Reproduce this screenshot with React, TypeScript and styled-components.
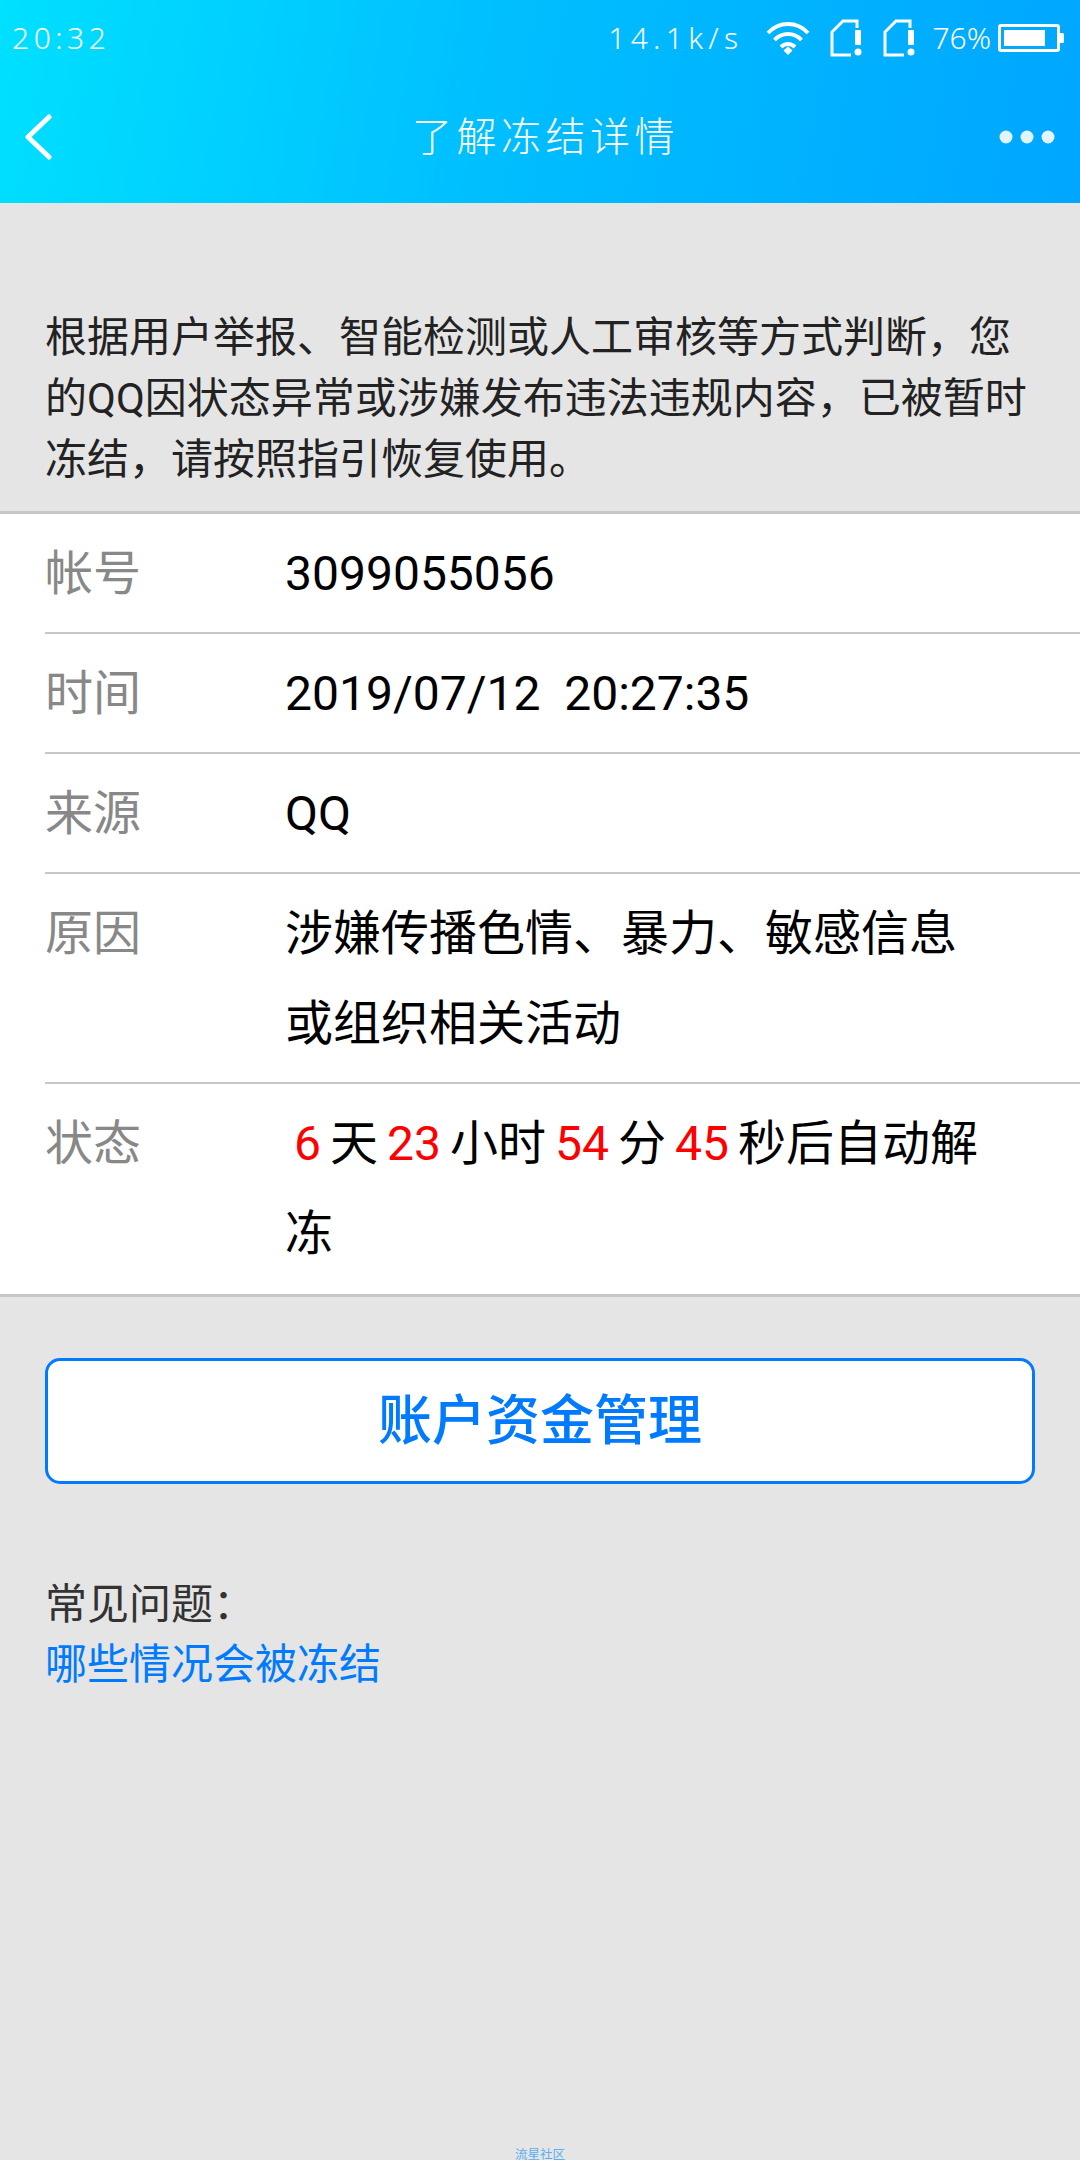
import React from 'react'
import styled, { createGlobalStyle } from 'styled-components'

const GlobalStyle = createGlobalStyle`
  html, body {
    margin: 0;
    padding: 0;
    background: #e5e5e5;
  }
  * {
    box-sizing: border-box;
  }
`

const Page = styled.div`
  width: 1080px;
  height: 2160px;
  overflow: hidden;
  display: flex;
  flex-direction: column;
  background: #e5e5e5;
  font-family: Roboto, 'Noto Sans CJK SC', sans-serif;
`

const Header = styled.header`
  height: 203px;
  display: flex;
  flex-direction: column;
  background: linear-gradient(100deg, #00e0ff 0%, #00bfff 45%, #00a6ff 100%);
  color: #fff;
`

const StatusBar = styled.div`
  height: 76px;
  display: flex;
  align-items: center;
  justify-content: space-between;
  padding: 0 16px 0 12px;
`

const StatusText = styled.span`
  font-family: 'Noto Sans', 'Noto Sans CJK SC', sans-serif;
  font-weight: 300;
  font-size: 30px;
  letter-spacing: ${({ $spacing }: { $spacing: number }) => $spacing}px;
  line-height: 40px;
`

const StatusIcons = styled.div`
  display: flex;
  align-items: center;
  gap: 20px;
`

const Speed = styled(StatusText)`
  margin-right: 3px;
`

const Percent = styled(StatusText)`
  margin-left: -4px;
`

const Battery = styled.svg`
  margin-left: -13px;
`

const NavBar = styled.nav`
  height: 127px;
  display: flex;
  align-items: center;
  justify-content: space-between;
  padding: 0 25px 6px 24px;
`

const Title = styled.h1`
  margin: 0 0 6px 40px;
  font-family: 'Noto Sans CJK SC', sans-serif;
  font-size: 40px;
  font-weight: 300;
  letter-spacing: 4.5px;
`

const Intro = styled.p`
  margin: 0;
  padding: 104px 45px 21px;
  font-size: 42px;
  line-height: 61px;
  color: #222;
`

const Table = styled.section`
  background: #fff;
  border-top: 3px solid #c8c8cc;
  border-bottom: 3px solid #c8c8cc;
  padding-left: 45px;
`

const Row = styled.div`
  display: flex;
  padding: 15px 0 13px;
  border-bottom: 2px solid #c8c8cc;

  &:last-child {
    border-bottom: none;
    padding-top: 15px;
    padding-bottom: 15px;
  }
`

const Label = styled.div`
  width: 240px;
  flex-shrink: 0;
  font-size: 48px;
  line-height: 90px;
  color: #888;
`

const Value = styled.div`
  width: 700px;
  font-size: 48px;
  line-height: 90px;
  color: #000;
`

const Red = styled.span`
  padding: 0 9px;
  color: #f00;
`

const ActionButton = styled.button`
  display: block;
  margin: 61px 45px 0;
  width: 990px;
  height: 126px;
  padding: 0 0 10px;
  background: #fff;
  border: 3px solid #007aff;
  border-radius: 15px;
  font-family: Roboto, 'Noto Sans CJK SC', sans-serif;
  font-size: 54px;
  font-weight: 500;
  color: #007aff;
`

const Faq = styled.section`
  margin-top: 91px;
  padding: 0 45px;
  font-size: 42px;
  line-height: 60px;
  color: #333;
`

const FaqLink = styled.a`
  display: block;
  color: #007aff;
`

const Watermark = styled.div`
  margin-top: auto;
  margin-bottom: -2px;
  text-align: center;
  font-size: 12.5px;
  line-height: 14px;
  color: #5ab0f0;
`

const WifiIcon = () => (
  <svg width="44" height="36" viewBox="0 0 44 36" fill="none" stroke="#fff" strokeWidth="4">
    <path d="M2 13C13 1 31 1 42 13" />
    <path d="M8.5 20C16 12 28 12 35.500 20" />
    <path d="M15 27C19 23 25 23 29 27" />
    <path d="M17.500 30.500L22 26.500L26.500 30.500L22 35Z" fill="#fff" stroke="none" />
  </svg>
)

const SimIcon = () => (
  <svg width="33" height="38" viewBox="0 0 33 38" fill="none">
    <path d="M21 36H2V13L13 2H27V9" stroke="#fff" strokeWidth="3" />
    <rect x="25" y="11" width="6" height="15" rx="1" fill="#fff" />
    <circle cx="28" cy="33" r="3.500" fill="#fff" />
  </svg>
)

const BatteryIcon = () => (
  <Battery width="66" height="28" viewBox="0 0 66 28" fill="none">
    <rect x="1.500" y="1.500" width="59" height="25" rx="1.500" stroke="#fff" strokeWidth="3" />
    <rect x="6" y="6" width="41" height="16" fill="#fff" />
    <rect x="61" y="9" width="5" height="10" rx="1.500" fill="#fff" />
  </Battery>
)

const BackIcon = () => (
  <svg width="28" height="46" viewBox="0 0 28 46" fill="none" stroke="#fff" strokeWidth="5" strokeLinecap="round" strokeLinejoin="round">
    <path d="M25 3L4 23L25 43" />
  </svg>
)

const MoreIcon = () => (
  <svg width="56" height="14" viewBox="0 0 56 14" fill="#fff" fillOpacity="0.88">
    <circle cx="7" cy="7" r="6.500" />
    <circle cx="28" cy="7" r="6.500" />
    <circle cx="49" cy="7" r="6.500" />
  </svg>
)

const App = () => (
  <Page>
    <GlobalStyle />
    <Header>
      <StatusBar>
        <StatusText $spacing={4.5}>20:32</StatusText>
        <StatusIcons>
          <Speed $spacing={5.3}>14.1k/s</Speed>
          <WifiIcon />
          <SimIcon />
          <SimIcon />
          <Percent $spacing={0}>76%</Percent>
          <BatteryIcon />
        </StatusIcons>
      </StatusBar>
      <NavBar>
        <BackIcon />
        <Title>了解冻结详情</Title>
        <MoreIcon />
      </NavBar>
    </Header>

    <Intro>根据用户举报、智能检测或人工审核等方式判断，您的QQ因状态异常或涉嫌发布违法违规内容，已被暂时冻结，请按照指引恢复使用。</Intro>

    <Table>
      <Row>
        <Label>帐号</Label>
        <Value>3099055056</Value>
      </Row>
      <Row>
        <Label>时间</Label>
        <Value>2019/07/12&nbsp; 20:27:35</Value>
      </Row>
      <Row>
        <Label>来源</Label>
        <Value>QQ</Value>
      </Row>
      <Row>
        <Label>原因</Label>
        <Value>涉嫌传播色情、暴力、敏感信息或组织相关活动</Value>
      </Row>
      <Row>
        <Label>状态</Label>
        <Value>
          <Red>6</Red>天<Red>23</Red>小时<Red>54</Red>分<Red>45</Red>秒后自动解冻
        </Value>
      </Row>
    </Table>

    <ActionButton>账户资金管理</ActionButton>

    <Faq>
      常见问题：
      <FaqLink>哪些情况会被冻结</FaqLink>
    </Faq>

    <Watermark>流星社区</Watermark>
  </Page>
)

export default App
